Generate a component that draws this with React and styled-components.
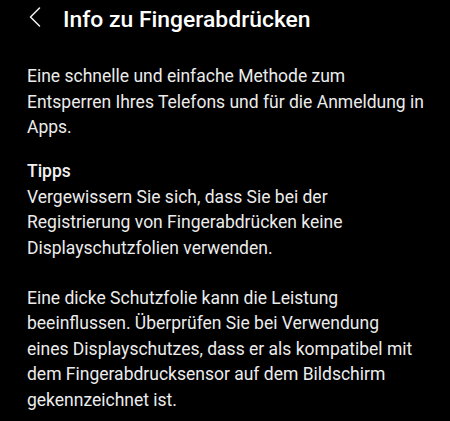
import styled, { createGlobalStyle } from "styled-components";

const GlobalStyle = createGlobalStyle`
    html, body {
        margin: 0;
        padding: 0;
        background: #000;
    }
    body {
        font-family: Roboto, "Noto Sans", sans-serif;
        -webkit-font-smoothing: antialiased;
    }
`;

const Screen = styled.div`
    width: 450px;
    min-height: 421px;
    background: #000;
    color: #ececec;
`;

const Header = styled.header`
    display: flex;
    align-items: center;
    padding: 6px 0 0 27px;
    height: 28px;
`;

const BackButton = styled.button`
    display: flex;
    align-items: center;
    justify-content: center;
    align-self: flex-start;
    width: 16px;
    height: 22px;
    padding: 0;
    margin-right: 20px;
    border: 0;
    background: transparent;
    color: #f2f2f2;
    cursor: pointer;
`;

const Title = styled.h1`
    margin: 0;
    font-size: 22.9px;
    line-height: 28px;
    font-weight: 500;
    color: #fff;
`;

const Content = styled.main`
    width: 400px;
    padding: 30px 0 0 27px;
`;

const Paragraph = styled.p`
    margin: 0 0 ${(p) => p.$gap || 0}px;
    font-size: 17.5px;
    line-height: 25.5px;
    font-weight: 400;
`;

const Heading = styled.h2`
    margin: 0;
    font-size: 17.5px;
    line-height: 25.5px;
    font-weight: 500;
    color: #f2f2f2;
`;

function ChevronLeft() {
    return (
        <svg width="12" height="20" viewBox="0 0 12 20" fill="none">
            <path
                d="M10.5 1 L1.5 10 L10.5 19"
                stroke="currentColor"
                strokeWidth="1.5"
                strokeLinecap="round"
                strokeLinejoin="round"
            />
        </svg>
    );
}

export default function App() {
    return (
        <Screen>
            <GlobalStyle />
            <Header>
                <BackButton aria-label="Zurück">
                    <ChevronLeft />
                </BackButton>
                <Title>Info zu Fingerabdrücken</Title>
            </Header>
            <Content>
                <Paragraph $gap={18.5}>
                    Eine schnelle und einfache Methode zum Entsperren Ihres
                    Telefons und für die Anmeldung in Apps.
                </Paragraph>
                <Heading>Tipps</Heading>
                <Paragraph $gap={24.5}>
                    Vergewissern Sie sich, dass Sie bei der Registrierung von
                    Fingerabdrücken keine Displayschutzfolien verwenden.
                </Paragraph>
                <Paragraph>
                    Eine dicke Schutzfolie kann die Leistung beeinflussen.
                    Überprüfen Sie bei Verwendung eines{"\u00a0"}Displayschutzes,
                    dass er als kompatibel mit dem Fingerabdrucksensor auf dem
                    Bildschirm gekennzeichnet ist.
                </Paragraph>
            </Content>
        </Screen>
    );
}
